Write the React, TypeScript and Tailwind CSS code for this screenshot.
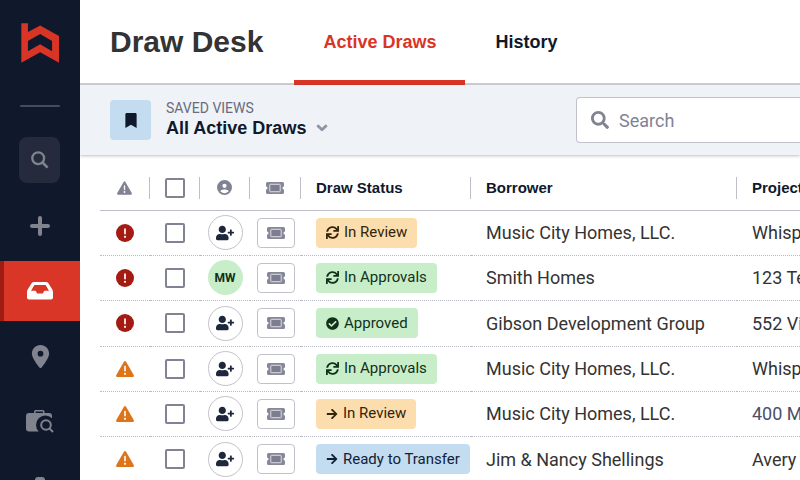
import type { ReactNode } from "react";
import {
  FaArrowRight,
  FaBookmark,
  FaCheckCircle,
  FaSearch,
  FaSync,
  FaUserPlus,
} from "react-icons/fa";
import { FaCircleUser, FaLocationDot } from "react-icons/fa6";

const heading = "font-['Liberation_Sans',Arial,sans-serif] font-bold";

type Status = { label: string; tone: "orange" | "green" | "blue"; icon: "sync" | "check" | "arrow" };

type Draw = {
  alert: "critical" | "warning";
  assignee?: string;
  status: Status;
  borrower: string;
  project: string;
  muted?: boolean;
};

const draws: Draw[] = [
  { alert: "critical", status: { label: "In Review", tone: "orange", icon: "sync" }, borrower: "Music City Homes, LLC.", project: "Whispering Pines" },
  { alert: "critical", assignee: "MW", status: { label: "In Approvals", tone: "green", icon: "sync" }, borrower: "Smith Homes", project: "123 Tennessee Ave" },
  { alert: "critical", status: { label: "Approved", tone: "green", icon: "check" }, borrower: "Gibson Development Group", project: "552 Village Way" },
  { alert: "warning", status: { label: "In Approvals", tone: "green", icon: "sync" }, borrower: "Music City Homes, LLC.", project: "Whispering Pines" },
  { alert: "warning", status: { label: "In Review", tone: "orange", icon: "arrow" }, borrower: "Music City Homes, LLC.", project: "400 Main Street", muted: true },
  { alert: "warning", status: { label: "Ready to Transfer", tone: "blue", icon: "arrow" }, borrower: "Jim & Nancy Shellings", project: "Avery" },
];

const tones = {
  orange: "bg-[#fcdeae] text-[#33240a]",
  green: "bg-[#c8edc9] text-[#12301a]",
  blue: "bg-[#c4dcef] text-[#10203a]",
};

function Logo() {
  return (
    <svg viewBox="60 70 115 120" className="h-10 w-[38px] shrink-0" aria-hidden="true">
      <path
        fill="#d93526"
        fillRule="evenodd"
        d="M61 70H81V97L118 77L175 109V190L118 158L61 190ZM81 124V155L118 134L154 155V124L118 103Z"
      />
    </svg>
  );
}

function SearchGlyph() {
  return (
    <svg viewBox="0 0 18 18" className="size-[18px]" fill="none" stroke="currentColor" aria-hidden="true">
      <circle cx="7.2" cy="7.2" r="5.9" strokeWidth="2.3" />
      <path d="M11.3 11.3L16.6 16.6" strokeWidth="2.7" />
    </svg>
  );
}

function PlusGlyph() {
  return (
    <svg viewBox="0 0 20 20" className="size-5" stroke="currentColor" strokeWidth="4" strokeLinecap="round" aria-hidden="true">
      <path d="M10 2V18M2 10H18" />
    </svg>
  );
}

function InboxGlyph() {
  return (
    <svg viewBox="0 0 26 18" className="h-[18px] w-[26px]" aria-hidden="true">
      <path
        fill="currentColor"
        fillRule="evenodd"
        d="M7 0H19Q20.6 0 21.4 1.3L25.3 7.6Q26 8.7 26 10V15.5Q26 17.5 24 17.5H2Q0 17.5 0 15.5V10Q0 8.7 .7 7.6L4.6 1.3Q5.4 0 7 0ZM7.4 3L4 8.7H8Q9 8.7 9.3 9.7L10 11.5H16L16.7 9.7Q17 8.7 18 8.7H22L18.6 3Z"
      />
    </svg>
  );
}

function CaseSearchGlyph() {
  return (
    <svg viewBox="0 0 28 24" className="h-6 w-7" aria-hidden="true">
      <path
        fill="currentColor"
        fillRule="evenodd"
        d="M8 4V2.5Q8 1 9.5 1H17Q18.5 1 18.5 2.5V4H23Q26 4 26 7V9.2A8.2 8.2 0 0 0 12.8 22.5H3Q0 22.5 0 19.5V7Q0 4 3 4ZM9.6 4H17V2.6H9.6Z"
      />
      <circle cx="20" cy="16" r="4.8" fill="none" stroke="currentColor" strokeWidth="2" />
      <path d="M23.4 19.4L27 23" stroke="currentColor" strokeWidth="2" />
    </svg>
  );
}

function CriticalGlyph({ className }: { className: string }) {
  return (
    <svg viewBox="0 0 18 18" role="img" aria-label="Critical" className={className}>
      <circle cx="9" cy="9" r="9" fill="currentColor" />
      <path d="M9 5V9.6" stroke="#fff" strokeWidth="1.7" strokeLinecap="round" />
      <circle cx="9" cy="12.8" r="1.1" fill="#fff" />
    </svg>
  );
}

function WarningGlyph({ label, className }: { label: string; className: string }) {
  return (
    <svg viewBox="0 0 18 16" role="img" aria-label={label} className={className}>
      <path
        fill="currentColor"
        d="M7.9 .8Q9 -.8 10.100 .8L17.700 13.900Q18.500 15.800 16.700 16H1.300Q-.5 15.800 .3 13.900Z"
      />
      <path d="M9 5.5V9.8" stroke="#fff" strokeWidth="1.6" strokeLinecap="round" />
      <circle cx="9" cy="12.8" r="1.1" fill="#fff" />
    </svg>
  );
}

function Ticket() {
  return (
    <svg viewBox="0 0 18 12" className="h-3 w-[18px]" aria-hidden="true">
      <path
        fill="#868899"
        d="M1.5 0H16.5Q18 0 18 1.5V4.5A1.5 1.5 0 0 0 18 7.5V10.5Q18 12 16.5 12H1.5Q0 12 0 10.5V7.5A1.5 1.5 0 0 0 0 4.5V1.5Q0 0 1.5 0Z"
      />
      <rect x="3.8" y="2.3" width="10.4" height="7.4" rx="0.5" fill="#7c7e90" stroke="#dcdce2" strokeWidth="1" />
    </svg>
  );
}

function Chevron() {
  return (
    <svg viewBox="0 0 12 8" className="h-2 w-3" fill="none" stroke="#9193a2" strokeWidth="2.8" aria-hidden="true">
      <path d="M1.3 1.3L6 5.8L10.7 1.3" strokeLinejoin="round" />
    </svg>
  );
}

function NavItem({ label, active, children }: { label: string; active?: boolean; children: ReactNode }) {
  return (
    <button
      type="button"
      aria-label={label}
      className={
        active
          ? "flex h-[60px] w-full shrink-0 items-center justify-center border-l-4 border-[#a01c13] bg-[#d93628] pr-1 text-white"
          : "flex h-[60px] w-full shrink-0 items-center justify-center text-[#81838f]"
      }
    >
      {children}
    </button>
  );
}

function Sidebar() {
  return (
    <nav aria-label="Main" className="flex w-20 shrink-0 flex-col items-center overflow-hidden bg-[#10182c] pt-[23px] pr-px">
      <Logo />
      <hr className="mt-[42px] h-[2px] w-10 shrink-0 rounded border-0 bg-[#474b5b]" />
      <button
        type="button"
        aria-label="Search"
        className="mt-[30px] mb-[13px] flex h-[46px] w-[41px] shrink-0 items-center justify-center rounded-lg bg-[#252a3c] text-[#81838f]"
      >
        <SearchGlyph />
      </button>
      <div className="-mr-px flex w-20 flex-col gap-[5px]">
        <NavItem label="Add"><PlusGlyph /></NavItem>
        <NavItem label="Draw Desk" active><InboxGlyph /></NavItem>
        <NavItem label="Locations"><FaLocationDot className="size-[23px]" /></NavItem>
        <NavItem label="Find projects"><CaseSearchGlyph /></NavItem>
        <NavItem label="Profile">
          <svg viewBox="0 0 20 20" className="size-5" fill="currentColor" aria-hidden="true">
            <rect x="5" y="1" width="10" height="10" rx="3" />
            <rect x="1" y="10" width="18" height="10" rx="2" />
          </svg>
        </NavItem>
      </div>
    </nav>
  );
}

function Separated({ children }: { children: ReactNode }) {
  return (
    <div className="flex h-[22px] items-center justify-center border-r border-[#bfbfc9]">{children}</div>
  );
}

function Checkbox({ label }: { label: string }) {
  return (
    <input
      type="checkbox"
      aria-label={label}
      className="block size-5 appearance-none rounded-xs border-2 border-[#818394] bg-white checked:bg-[#818394]"
    />
  );
}

function StatusPill({ label, tone, icon }: Status) {
  return (
    <span className={`inline-flex h-[30px] items-center gap-[5px] rounded px-[10px] align-middle text-[15px] ${tones[tone]}`}>
      {icon === "sync" && <FaSync className="size-[13px]" />}
      {icon === "check" && <FaCheckCircle className="size-[13px]" />}
      {icon === "arrow" && <FaArrowRight className="size-3" />}
      {label}
    </span>
  );
}

function DrawRow({ draw }: { draw: Draw }) {
  return (
    <tr className="h-[45px] border-b border-dotted border-[#b8b8c2] nth-[3n]:h-[46px]">
      <td className="p-0">
        {draw.alert === "critical" ? (
          <CriticalGlyph className="mx-auto block size-[18px] text-[#a31b12]" />
        ) : (
          <WarningGlyph label="Warning" className="mx-auto block h-4 w-[18px] text-[#de7419]" />
        )}
      </td>
      <td className="p-0">
        <div className="flex justify-center"><Checkbox label={`Select ${draw.borrower}`} /></div>
      </td>
      <td className="p-0">
        {draw.assignee ? (
          <button type="button" className="mx-auto flex size-[35px] items-center justify-center rounded-full bg-[#c8edc9] text-xs font-bold text-[#12301a]">
            {draw.assignee}
          </button>
        ) : (
          <button type="button" aria-label="Assign" className="mx-auto flex size-[35px] items-center justify-center rounded-full border border-[#c2c2cc] text-[#1f273d]">
            <FaUserPlus className="size-[18px]" />
          </button>
        )}
      </td>
      <td className="p-0">
        <button type="button" aria-label="Ticket" className="mx-auto flex h-[30px] w-[38px] items-center justify-center rounded border border-[#c2c2cc]">
          <Ticket />
        </button>
      </td>
      <td className="p-0 pl-[15px]"><StatusPill {...draw.status} /></td>
      <td className="p-0 pl-[15px]">{draw.borrower}</td>
      <td className={draw.muted ? "p-0 pl-[15px] text-[#4b4e68]" : "p-0 pl-[15px]"}>{draw.project}</td>
    </tr>
  );
}

export default function App() {
  return (
    <div className="flex h-screen overflow-hidden bg-white font-[Roboto,sans-serif] text-[#333333]">
      <Sidebar />
      <main className="flex min-w-0 flex-1 flex-col overflow-hidden">
        <header className="flex h-[85px] shrink-0 items-stretch border-b-2 border-[#d0d0d8] pl-[30px]">
          <h1 className={`${heading} mr-[31px] flex items-center text-[30px]`}>Draw Desk</h1>
          <div role="tablist" className={`${heading} -mb-[2px] flex items-stretch text-[18px]`}>
            <button type="button" role="tab" aria-selected="true" className="border-y-5 border-t-transparent border-b-[#d93526] px-[29px] text-[#d93526]">
              Active Draws
            </button>
            <button type="button" role="tab" aria-selected="false" className="border-y-5 border-transparent px-[30px] text-[#10182c]">
              History
            </button>
          </div>
        </header>

        <section aria-label="Saved views" className="z-10 flex h-[70px] shrink-0 items-center gap-[15px] bg-[#eff3f7] pl-[30px] shadow-[0_1px_3px_rgba(0,0,0,0.25)]">
          <div className="flex h-10 w-[41px] shrink-0 items-center justify-center rounded bg-[#c4dcef] text-[#10182c]">
            <FaBookmark className="h-[15px] w-3" />
          </div>
          <div className="shrink-0">
            <p className="text-sm leading-4 text-[#696b7d]">SAVED VIEWS</p>
            <button type="button" className={`${heading} flex items-center gap-[10px] text-[18px] leading-6 text-[#10182c]`}>
              All Active Draws
              <Chevron />
            </button>
          </div>
          <label className="ml-auto flex h-[46px] w-[224px] shrink-0 items-center gap-[10px] rounded-l border border-r-0 border-[#c2c2cc] bg-white pl-[14px] text-[#818394]">
            <FaSearch className="size-[18px] shrink-0" />
            <input type="search" placeholder="Search" aria-label="Search draws" className="min-w-0 flex-1 bg-transparent text-[18px] outline-none placeholder:text-[#818394]" />
          </label>
        </section>

        <div className="overflow-hidden pt-[11px] pl-5">
          <table className="w-full table-fixed border-collapse text-left text-[18px] whitespace-nowrap">
            <colgroup>
              <col className="w-[50px]" />
              <col className="w-[50px]" />
              <col className="w-[50px]" />
              <col className="w-[51px]" />
              <col className="w-[170px]" />
              <col className="w-[266px]" />
              <col />
            </colgroup>
            <thead className={`${heading} text-[15px] text-[#10182c]`}>
              <tr className="h-11 border-b border-[#bfbfc9]">
                <th scope="col" className="p-0"><Separated><WarningGlyph label="Alert" className="h-[14px] w-[15px] text-[#818394]" /></Separated></th>
                <th scope="col" className="p-0"><Separated><Checkbox label="Select all draws" /></Separated></th>
                <th scope="col" className="p-0"><Separated><FaCircleUser aria-label="Assignee" className="size-[15px] text-[#818394]" /></Separated></th>
                <th scope="col" className="p-0"><Separated><Ticket /></Separated></th>
                <th scope="col" className="p-0">
                  <div className="flex h-[22px] items-center border-r border-[#bfbfc9] pl-[15px]">Draw Status</div>
                </th>
                <th scope="col" className="p-0">
                  <div className="flex h-[22px] items-center border-r border-[#bfbfc9] pl-[15px]">Borrower</div>
                </th>
                <th scope="col" className="p-0 pl-[15px]">Project</th>
              </tr>
            </thead>
            <tbody>
              {draws.map((draw, index) => (
                <DrawRow key={index} draw={draw} />
              ))}
            </tbody>
          </table>
        </div>
      </main>
    </div>
  );
}
